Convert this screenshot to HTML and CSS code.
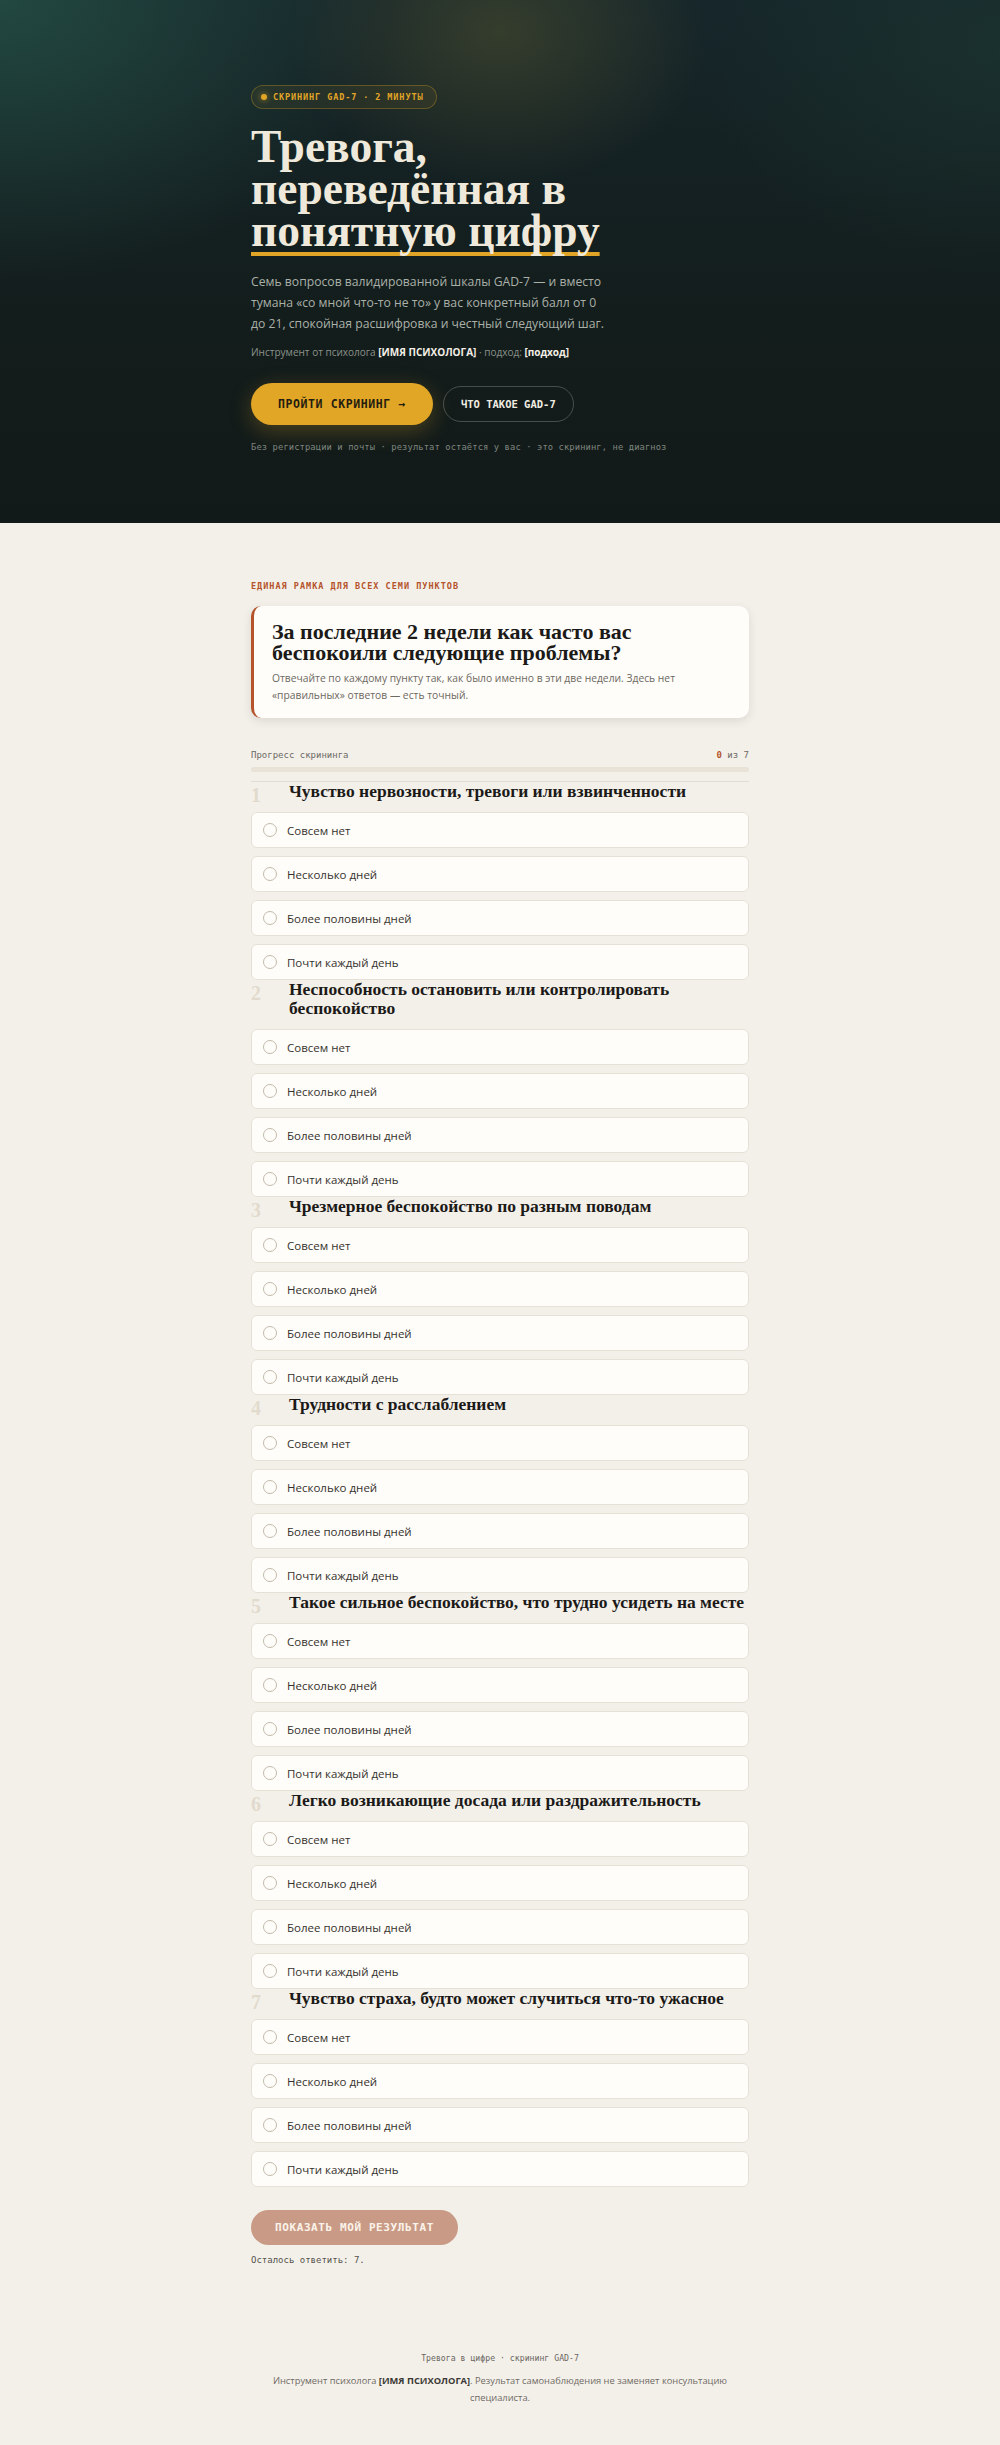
FILE: index.html
```html
<!DOCTYPE html>
<html lang="ru">
<head>
    <meta charset="utf-8">
    <title>Тревога в цифре · скрининг GAD-7</title>
    <link rel="stylesheet" href="styles.css">
</head>
<body>
    <header class="hero">
        <div class="wrap">
            <div class="badge"><span class="badge-dot"></span>Скрининг GAD-7 · 2 минуты</div>
            <h1>Тревога, переведённая в <span class="mark">понятную цифру</span></h1>
            <p class="lead">Семь вопросов валидированной шкалы GAD-7 — и вместо тумана «со мной что-то не то» у вас конкретный балл от 0 до 21, спокойная расшифровка и честный следующий шаг.</p>
            <p class="credit">Инструмент от психолога <b>[ИМЯ ПСИХОЛОГА]</b> · подход: <b>[подход]</b></p>
            <div class="actions">
                <a class="btn btn-primary" href="#test">Пройти скрининг →</a>
                <a class="btn btn-ghost" href="#about">Что такое GAD-7</a>
            </div>
            <p class="note">Без регистрации и почты · результат остаётся у вас · это скрининг, не диагноз</p>
        </div>
    </header>

    <main class="test" id="test">
        <div class="wrap">
            <div class="eyebrow">Единая рамка для всех семи пунктов</div>
            <div class="frame">
                <h2>За последние 2 недели как часто вас беспокоили следующие проблемы?</h2>
                <p>Отвечайте по каждому пункту так, как было именно в эти две недели. Здесь нет «правильных» ответов — есть точный.</p>
            </div>

            <div class="progress">
                <div class="progress-row">
                    <span>Прогресс скрининга</span>
                    <span><b id="done">0</b> из 7</span>
                </div>
                <div class="bar"><div class="bar-fill" id="fill" style="width: 0%"></div></div>
            </div>

            <form id="gad">
                <div class="q">
                    <div class="q-head"><span class="q-num">1</span><h3>Чувство нервозности, тревоги или взвинченности</h3></div>
                    <label class="opt"><input type="radio" name="q1" value="0">Совсем нет</label>
                    <label class="opt"><input type="radio" name="q1" value="1">Несколько дней</label>
                    <label class="opt"><input type="radio" name="q1" value="2">Более половины дней</label>
                    <label class="opt"><input type="radio" name="q1" value="3">Почти каждый день</label>
                </div>
                <div class="q">
                    <div class="q-head"><span class="q-num">2</span><h3>Неспособность остановить или контролировать беспокойство</h3></div>
                    <label class="opt"><input type="radio" name="q2" value="0">Совсем нет</label>
                    <label class="opt"><input type="radio" name="q2" value="1">Несколько дней</label>
                    <label class="opt"><input type="radio" name="q2" value="2">Более половины дней</label>
                    <label class="opt"><input type="radio" name="q2" value="3">Почти каждый день</label>
                </div>
                <div class="q">
                    <div class="q-head"><span class="q-num">3</span><h3>Чрезмерное беспокойство по разным поводам</h3></div>
                    <label class="opt"><input type="radio" name="q3" value="0">Совсем нет</label>
                    <label class="opt"><input type="radio" name="q3" value="1">Несколько дней</label>
                    <label class="opt"><input type="radio" name="q3" value="2">Более половины дней</label>
                    <label class="opt"><input type="radio" name="q3" value="3">Почти каждый день</label>
                </div>
                <div class="q">
                    <div class="q-head"><span class="q-num">4</span><h3>Трудности с расслаблением</h3></div>
                    <label class="opt"><input type="radio" name="q4" value="0">Совсем нет</label>
                    <label class="opt"><input type="radio" name="q4" value="1">Несколько дней</label>
                    <label class="opt"><input type="radio" name="q4" value="2">Более половины дней</label>
                    <label class="opt"><input type="radio" name="q4" value="3">Почти каждый день</label>
                </div>
                <div class="q">
                    <div class="q-head"><span class="q-num">5</span><h3>Такое сильное беспокойство, что трудно усидеть на месте</h3></div>
                    <label class="opt"><input type="radio" name="q5" value="0">Совсем нет</label>
                    <label class="opt"><input type="radio" name="q5" value="1">Несколько дней</label>
                    <label class="opt"><input type="radio" name="q5" value="2">Более половины дней</label>
                    <label class="opt"><input type="radio" name="q5" value="3">Почти каждый день</label>
                </div>
                <div class="q">
                    <div class="q-head"><span class="q-num">6</span><h3>Легко возникающие досада или раздражительность</h3></div>
                    <label class="opt"><input type="radio" name="q6" value="0">Совсем нет</label>
                    <label class="opt"><input type="radio" name="q6" value="1">Несколько дней</label>
                    <label class="opt"><input type="radio" name="q6" value="2">Более половины дней</label>
                    <label class="opt"><input type="radio" name="q6" value="3">Почти каждый день</label>
                </div>
                <div class="q">
                    <div class="q-head"><span class="q-num">7</span><h3>Чувство страха, будто может случиться что-то ужасное</h3></div>
                    <label class="opt"><input type="radio" name="q7" value="0">Совсем нет</label>
                    <label class="opt"><input type="radio" name="q7" value="1">Несколько дней</label>
                    <label class="opt"><input type="radio" name="q7" value="2">Более половины дней</label>
                    <label class="opt"><input type="radio" name="q7" value="3">Почти каждый день</label>
                </div>

                <button type="submit" class="submit" id="submit" disabled>Показать мой результат</button>
                <p class="left" id="left">Осталось ответить: 7.</p>
            </form>
        </div>
    </main>

    <footer class="footer">
        <div class="footer-brand">Тревога в цифре · скрининг GAD-7</div>
        <p>Инструмент психолога <b>[ИМЯ ПСИХОЛОГА]</b>. Результат самонаблюдения не заменяет консультацию специалиста.</p>
    </footer>

    <script>
        const form = document.getElementById('gad');
        const done = document.getElementById('done');
        const fill = document.getElementById('fill');
        const left = document.getElementById('left');
        const submit = document.getElementById('submit');

        form.addEventListener('change', () => {
            const answered = new Set();
            form.querySelectorAll('input:checked').forEach((input) => answered.add(input.name));
            done.textContent = answered.size;
            fill.style.width = (answered.size / 7 * 100) + '%';
            left.textContent = answered.size < 7 ? 'Осталось ответить: ' + (7 - answered.size) + '.' : 'Все пункты заполнены.';
            submit.disabled = answered.size < 7;
        });

        form.addEventListener('submit', (event) => {
            event.preventDefault();
        });
    </script>
</body>
</html>
```

FILE: styles.css
```css
body {
    margin: 0;
    background-color: #f3f0ea;
    font-family: "Open Sans", "Noto Sans", sans-serif;
    color: #2a2826;
}

.wrap {
    max-width: 498px;
    margin: 0 auto;
}

/* hero */

.hero {
    background:
        radial-gradient(ellipse 300px 220px at 50% 6%, rgba(110, 105, 50, 0.35), transparent 70%),
        radial-gradient(ellipse 520px 380px at 0% 0%, rgba(36, 78, 68, 0.85), transparent 75%),
        radial-gradient(ellipse 400px 300px at 100% 10%, rgba(30, 60, 52, 0.5), transparent 75%),
        linear-gradient(180deg, #16262a 0%, #131d1c 60%, #121a19 100%);
    padding: 83px 0 71px;
    color: #efe9dc;
}

.badge {
    display: inline-flex;
    align-items: center;
    gap: 6px;
    height: 22px;
    padding: 0 13px 0 9px;
    border: 1px solid rgba(226, 166, 38, 0.3);
    background-color: rgba(226, 166, 38, 0.07);
    border-radius: 20px;
    font-family: "DejaVu Sans Mono", monospace;
    font-size: 8.5px;
    font-weight: bold;
    letter-spacing: 0.9px;
    text-transform: uppercase;
    color: #e2a626;
}

.badge-dot {
    width: 6px;
    height: 6px;
    border-radius: 50%;
    background-color: #e2a626;
    box-shadow: 0 0 6px rgba(226, 166, 38, 0.8);
}

.hero h1 {
    font-family: "Liberation Serif", "Times New Roman", serif;
    font-size: 45.5px;
    line-height: 42px;
    font-weight: bold;
    max-width: 390px;
    margin: 17px 0 19px;
    color: #efe9dc;
}

.mark {
    text-decoration: underline;
    text-decoration-color: #e0a526;
    text-decoration-thickness: 4px;
    text-underline-offset: 6px;
    text-decoration-skip-ink: none;
}

.lead {
    max-width: 360px;
    margin: 0 0 10px;
    font-size: 12.2px;
    line-height: 21px;
    color: #aab0a8;
}

.credit {
    margin: 0 0 23px;
    font-size: 10px;
    line-height: 16px;
    color: #8c928a;
}

.credit b {
    color: #f3efe6;
}

.actions {
    display: flex;
    align-items: center;
    gap: 10px;
}

.btn {
    display: inline-block;
    font-family: "DejaVu Sans Mono", monospace;
    font-weight: bold;
    font-size: 11.5px;
    letter-spacing: 0.6px;
    text-transform: uppercase;
    text-decoration: none;
    border-radius: 30px;
}

.btn-primary {
    background-color: #e2a626;
    color: #241d10;
    padding: 14px 27px;
    box-shadow: 0 6px 22px rgba(226, 166, 38, 0.28);
}

.btn-ghost {
    color: #f0ece2;
    border: 1px solid rgba(255, 255, 255, 0.22);
    padding: 11px 17px;
    font-size: 10.5px;
    letter-spacing: 0;
}

.note {
    margin: 17px 0 0;
    font-family: "DejaVu Sans Mono", monospace;
    font-size: 8.8px;
    letter-spacing: 0.1px;
    color: #7f867f;
}

/* test */

.test {
    padding: 58px 0 60px;
}

.eyebrow {
    font-family: "DejaVu Sans Mono", monospace;
    font-size: 8.5px;
    font-weight: bold;
    letter-spacing: 1px;
    text-transform: uppercase;
    color: #b5532a;
    margin-bottom: 15px;
}

.frame {
    background-color: #fffdf9;
    border-left: 3px solid #b5532a;
    border-radius: 10px;
    box-shadow: 0 3px 10px rgba(60, 45, 30, 0.12);
    padding: 15px 18px 14px;
}

.frame h2 {
    font-family: "Liberation Serif", "Times New Roman", serif;
    font-size: 22px;
    line-height: 21px;
    margin: 0 0 7px;
    color: #1c1a18;
}

.frame p {
    margin: 0;
    font-size: 10.3px;
    line-height: 17px;
    color: #6d6862;
}

.progress {
    margin-top: 32px;
    padding-bottom: 9px;
    border-bottom: 1px solid #e2ddd3;
}

.progress-row {
    display: flex;
    justify-content: space-between;
    font-family: "DejaVu Sans Mono", monospace;
    font-size: 9px;
    color: #6d6a64;
    margin-bottom: 7px;
}

.progress-row b {
    color: #b5532a;
}

.bar {
    height: 5px;
    border-radius: 3px;
    background-color: #e8e2d7;
}

.bar-fill {
    height: 100%;
    border-radius: 3px;
    background-color: #b5532a;
}

.q-head {
    display: flex;
    align-items: flex-start;
    margin-bottom: 11px;
}

.q-num {
    flex: 0 0 38px;
    font-family: "Liberation Serif", "Times New Roman", serif;
    font-size: 20px;
    line-height: 19px;
    font-weight: bold;
    color: #e2dbcd;
    transform: translateY(4px);
}

.q-head h3 {
    margin: 0;
    font-family: "Liberation Serif", "Times New Roman", serif;
    font-size: 17.5px;
    line-height: 19px;
    color: #1c1a18;
}

.opt {
    display: flex;
    align-items: center;
    gap: 10px;
    height: 34px;
    padding: 0 11px;
    margin-bottom: 8px;
    background-color: #fffdf9;
    border: 1px solid #e6e1d7;
    border-radius: 6px;
    font-size: 11.5px;
    color: #35322e;
    cursor: pointer;
}

.opt:last-child {
    margin-bottom: 0;
}

.opt input {
    appearance: none;
    margin: 0;
    width: 14px;
    height: 14px;
    border: 1.5px solid #c3baab;
    border-radius: 50%;
}

.opt input:checked {
    border-color: #b5532a;
    background: radial-gradient(circle, #b5532a 40%, transparent 45%);
}

.submit {
    margin-top: 23px;
    background-color: #c99b86;
    color: #fbf3ea;
    border: none;
    border-radius: 30px;
    padding: 0 24px;
    height: 35px;
    font-family: "DejaVu Sans Mono", monospace;
    font-weight: bold;
    font-size: 11px;
    letter-spacing: 0.6px;
    text-transform: uppercase;
}

.left {
    margin: 10px 0 0;
    font-family: "DejaVu Sans Mono", monospace;
    font-size: 9px;
    color: #55514b;
}

/* footer */

.footer {
    text-align: center;
    padding: 28px 0 40px;
}

.footer-brand {
    font-family: "DejaVu Sans Mono", monospace;
    font-size: 8.2px;
    color: #6a665f;
    margin-bottom: 9px;
}

.footer p {
    max-width: 480px;
    margin: 0 auto;
    font-size: 9.3px;
    line-height: 17px;
    color: #6f6a63;
}

.footer b {
    color: #3b3834;
}
```
